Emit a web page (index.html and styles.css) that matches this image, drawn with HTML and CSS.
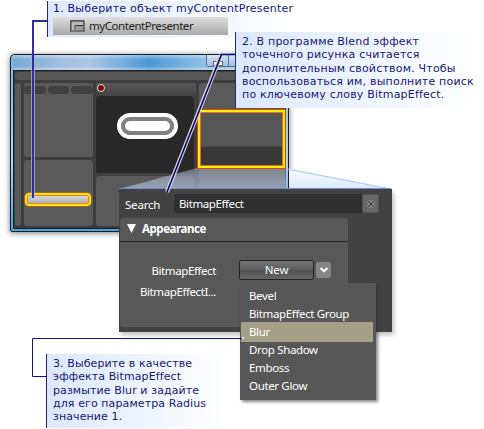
FILE: index.html
```html
<!DOCTYPE html>
<html lang="ru">
<head>
<meta charset="utf-8">
<title>BitmapEffect</title>
<link rel="stylesheet" href="styles.css">
</head>
<body>
<main class="diagram">
  <section class="window">
    <header class="titlebar"><div class="caption"><i></i><i></i><i></i></div></header>
    <div class="workspace">
      <div class="toolbar"></div>
      <div class="columns">
        <div class="pane strip"></div>
        <div class="left">
          <div class="pane tree"><div class="tabs"><i></i><i></i><i></i></div></div>
          <div class="pane objects"><div class="selected"></div></div>
        </div>
        <div class="middle">
          <div class="tabbar"><b class="record"></b></div>
          <div class="artboard"><div class="ring"><i></i></div></div>
          <div class="pane results"></div>
        </div>
        <div class="pane right"></div>
      </div>
    </div>
  </section>

  <svg class="beam" width="484" height="429" viewBox="0 0 484 429">
    <defs>
      <linearGradient id="ray" x1="0" y1="0" x2="0" y2="1"><stop offset="0" stop-color="#aebbd0" stop-opacity=".45"/><stop offset="1" stop-color="#a4b2cf" stop-opacity=".8"/></linearGradient>
      <linearGradient id="sky" x1="0" y1="0" x2="0" y2="1"><stop offset="0" stop-color="#f8fbff"/><stop offset="1" stop-color="#dce9fd"/></linearGradient>
    </defs>
    <path d="M289 168.500L391 189H289Z" fill="url(#sky)"/>
    <path d="M287 169L391 189" stroke="#a9c4f5" fill="none"/>
    <path d="M197 168H286V189H119Z" fill="url(#ray)"/>
    <path d="M119 188.5H391" stroke="#718fd0"/>
  </svg>
  <div class="focus"><div></div></div>

  <section class="inspector">
    <div class="search"><span class="label">Search</span><div class="field">BitmapEffect</div><div class="clear"><svg width="10" height="10" viewBox="0 0 10 10"><path d="M2 2L8 8M8 2L2 8" stroke="#999" stroke-width="3.4"/><path d="M2 2L8 8M8 2L2 8" stroke="#4b4b4b" stroke-width="1.6"/></svg></div></div>
    <div class="category">
      <h2><svg width="10" height="10" viewBox="0 0 10 10"><path d="M0 0H9L4.5 9Z" fill="#fff"/></svg>Appearance</h2>
      <div class="property"><span>BitmapEffect</span><button class="new">New</button><button class="drop"><svg width="10" height="8" viewBox="0 0 10 8"><path d="M1.5 2L5 5.3L8.5 2" fill="none" stroke="#fff" stroke-width="2"/></svg></button></div>
      <div class="property second"><span>BitmapEffectI...</span></div>
    </div>
  </section>

  <ul class="menu"><li>Bevel</li><li>BitmapEffect Group</li><li class="active">Blur</li><li>Drop Shadow</li><li>Emboss</li><li>Outer Glow</li></ul>

  <aside class="callout first">
    <p>1. Выберите объект myContentPresenter</p>
    <div class="presenter"><svg width="15" height="12" viewBox="0 0 15 12"><path d="M.8.8H14V11H.8Z" fill="#bbb" stroke="#333" stroke-width="1.2"/><path d="M5 10V5.5H13" fill="none" stroke="#333"/><path d="M5.5 6H13V10H5.500Z" fill="#999"/></svg><span>myContentPresenter</span></div>
  </aside>
  <aside class="callout second-note">
    <p>2. В программе Blend эффект</p><p>точечного рисунка считается</p><p>дополнительным свойством. Чтобы</p><p>воспользоваться им, выполните поиск</p><p>по ключевому слову BitmapEffect.</p>
  </aside>
  <aside class="callout third">
    <p>3. Выберите в качестве</p><p>эффекта BitmapEffect</p><p>размытие Blur и задайте</p><p>для его параметра Radius</p><p>значение 1.</p>
  </aside>

  <svg class="connectors" width="484" height="429" viewBox="0 0 484 429" fill="none">
    <path d="M31.5 55V198M34.5 55V198" stroke="#b5b5bc" stroke-opacity=".75"/>
    <path d="M47 21H33V198" stroke="#30309a" stroke-width="2"/>
    <path d="M221 55L167 192" stroke="#d6d6db" stroke-width="4"/>
    <path d="M236 54.5H221.5L167 192" stroke="#08086e" stroke-width="1.6"/>
    <path d="M242 338.500H32.500V376.500H47" stroke="#101080"/>
    <circle cx="243" cy="338" r="1" fill="#fff"/>
  </svg>
</main>
</body>
</html>
```
FILE: styles.css
```css
* { box-sizing: border-box; }
body { margin: 0; background: #fff; }
p, h2, ul { margin: 0; padding: 0; }
.diagram { position: relative; width: 484px; height: 429px; overflow: hidden; font: 11.5px/18px "Noto Sans", sans-serif; letter-spacing: -.4px; color: #fff; }
.window { position: absolute; left: 10px; top: 54px; width: 279px; height: 178px; border: 1px solid #17202a; border-radius: 4px 4px 2px 2px; padding: 0 2px 2px; background: linear-gradient(#7db8e5, #a8d7f8 60%, #4aa3e2); box-shadow: 0 1px 5px 1px #999; display: flex; flex-direction: column; }
.titlebar { height: 15px; display: flex; justify-content: flex-end; background: linear-gradient(#fff6, #fff0 30%, #fff0 75%, #fff6), linear-gradient(90deg, #76aad8, #a8c0e2 20%, #abc6e7 28%, #4d98d5 50%, #8abce4 68%, #b8d3ec); }
.caption { display: flex; height: 12px; width: 80px; border: 1px solid #56718a; border-top: 0; border-radius: 0 0 3px 3px; }
.caption i { width: 22px; border-right: 1px solid #56718a; background: linear-gradient(#d7e5f2, #9fbfdc); display: flex; align-items: center; justify-content: center; }
.caption i::after { content: ""; width: 8px; height: 3px; margin-top: 5px; border: 1px solid #666; background: #fff; }
.workspace { flex: 1; border: 1px solid #1c1c1c; background: #3e3e3e; padding: 1px 0 2px 1px; display: flex; flex-direction: column; gap: 3px; }
.toolbar { height: 8px; border-radius: 4px 0 0 4px; background: #565656; }
.columns { flex: 1; display: flex; gap: 3px; }
.pane { background: #5a5a5a; border-radius: 3px; }
.strip { width: 6px; }
.left { width: 69px; display: flex; flex-direction: column; gap: 3px; }
.tree { height: 74px; }
.tabs { display: flex; gap: 2px; padding-top: 3px; }
.tabs i { flex: 1; height: 8px; border-radius: 3px; background: #414141; }
.objects { flex: 1; padding-top: 33px; }
.selected { margin-left: 1px; width: 66px; height: 13px; border: 2px solid #ffe800; border-radius: 4px; outline: 1px solid #e0681899; background: linear-gradient(#ddd, #aaa); background-clip: padding-box; box-shadow: inset 0 0 0 1px #df7d39; }
.middle { width: 100px; display: flex; flex-direction: column; }
.tabbar { height: 13px; background: linear-gradient(#585858, #424242); padding: 1px; }
.record { display: block; width: 8px; height: 8px; border: 1px solid #ddd; border-radius: 50%; background: #850000; }
.artboard { height: 77px; margin-right: 2px; background: #282828; border-radius: 3px; padding: 17px 0 0 21px; }
.ring { width: 61px; height: 26px; border-radius: 13px; border: 4px solid #fff; background: #808080; background-clip: padding-box; padding: 4px; }
.ring i { display: block; height: 10px; border-radius: 5px; background: #fff; }
.results { flex: 1; margin: 3px 2px 0 0; }
.right { flex: 1; }
.beam, .connectors { position: absolute; left: 0; top: 0; }
.focus { position: absolute; left: 197px; top: 109px; width: 89px; height: 60px; border: 1px solid #d9481b; background: #ffed00; padding: 2px; }
.focus div { height: 54px; border: 1px solid #e26d24; background: linear-gradient(#565656 0 33px, #393939 34px); }
.inspector { position: absolute; left: 119px; top: 189px; width: 273px; height: 143px; background: #424242; box-shadow: 2px 3px 4px #9999; }
.search { display: flex; height: 29px; padding: 5px 0 0 6px; }
.label { width: 49px; line-height: 21px; letter-spacing: -.2px; }
.field { width: 188px; height: 19px; padding-left: 5px; line-height: 20px; background: #303030; border-radius: 3px 0 0 3px; }
.clear { width: 17px; height: 19px; background: #686868; border: 1px solid #555; border-radius: 2px; display: flex; align-items: center; justify-content: center; }
.category { width: 228px; height: 109px; margin-left: 1px; background: #585858; border-radius: 4px 4px 0 3px; }
h2 { height: 24px; display: flex; align-items: center; gap: 5px; padding: 0 0 1px 7px; border-bottom: 1px solid #282828; font-size: 11.5px; line-height: 22px; letter-spacing: -.45px; }
.property { display: flex; align-items: center; height: 20px; margin-top: 18px; }
.property span { width: 96px; text-align: right; padding-top: 2px; white-space: nowrap; }
.property.second { margin-top: 2px; height: 18px; }
button { font: inherit; letter-spacing: inherit; color: #fff; padding: 0; }
.new { width: 75px; height: 20px; margin-left: 23px; border: 1px solid #242424; border-radius: 2px; background: linear-gradient(#757575, #5b5b5b 50%, #515151 52%, #666); line-height: 16px; letter-spacing: -.1px; }
.drop { width: 15px; height: 16px; margin-left: 2px; border: 0; border-radius: 2px; background: #868686; display: flex; align-items: center; justify-content: center; }
.menu { position: absolute; left: 240px; top: 283px; width: 136px; height: 117px; padding: 4px 3px 0 1px; list-style: none; background: #575757; box-shadow: 2px 2px 3px #3339; letter-spacing: -.35px; }
.menu li { height: 18px; padding-left: 8px; line-height: 18px; }
.menu .active { background: #a3a087; box-shadow: 0 1px #a3a087; margin-top: -1px; padding-top: 1px; height: 19px; }
.callout { position: absolute; border-left: 1px solid #25258a; background: linear-gradient(90deg, #dbe8fc, #e9f1fe 40%, #fff); color: #161675; font: 11px/13.3px "DejaVu Sans", sans-serif; letter-spacing: .2px; white-space: nowrap; }
.first { left: 47px; top: 1px; width: 250px; height: 36px; padding: 1px 0 0 5px; }
.presenter { width: 175px; height: 18px; margin-top: 2px; padding-left: 17px; display: flex; align-items: center; gap: 4px; background: linear-gradient(#dedede, #a9a9a9); color: #222; font: 11.5px/18px "Noto Sans", sans-serif; letter-spacing: -.45px; }
.second-note { left: 235px; top: 32px; width: 240px; height: 76px; padding: 3px 0 0 6px; }
.third { left: 46px; top: 354px; width: 180px; height: 74px; padding: 3px 0 0 6px; letter-spacing: .1px; }
```
